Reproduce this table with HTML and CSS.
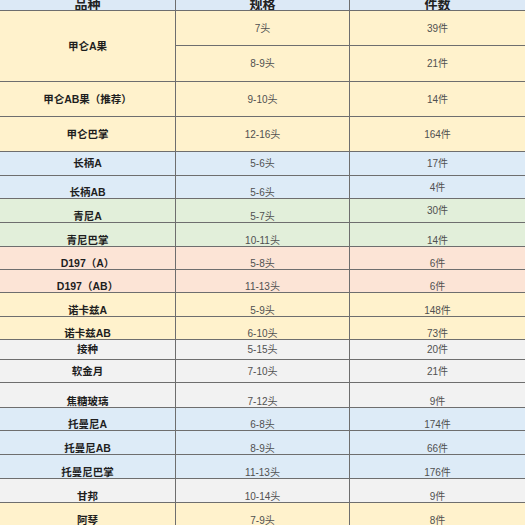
FILE: index.html
```html
<!DOCTYPE html>
<html lang="zh">
<head>
<meta charset="utf-8">
<link rel="stylesheet" href="styles.css">
</head>
<body>
<div class="sheet">
  <div class="c hd">品种</div><div class="c hd">规格</div><div class="c hd">件数</div>

  <div class="c y n span2">甲仑A果</div><div class="c y v">7头</div><div class="c y v">39件</div>
  <div class="c y v">8-9头</div><div class="c y v">21件</div>
  <div class="c y n">甲仑AB果（推荐）</div><div class="c y v">9-10头</div><div class="c y v">14件</div>
  <div class="c y n">甲仑巴掌</div><div class="c y v">12-16头</div><div class="c y v">164件</div>

  <div class="c bl n">长柄A</div><div class="c bl v">5-6头</div><div class="c bl v">17件</div>
  <div class="c bl n b">长柄AB</div><div class="c bl v b">5-6头</div><div class="c bl v">4件</div>

  <div class="c g n b">青尼A</div><div class="c g v b">5-7头</div><div class="c g v">30件</div>
  <div class="c g n b">青尼巴掌</div><div class="c g v b">10-11头</div><div class="c g v b">14件</div>

  <div class="c p n b">D197（A）</div><div class="c p v b">5-8头</div><div class="c p v b">6件</div>
  <div class="c p n b">D197（AB）</div><div class="c p v b">11-13头</div><div class="c p v b">6件</div>

  <div class="c y n b">诺卡兹A</div><div class="c y v b">5-9头</div><div class="c y v b">148件</div>
  <div class="c y n b">诺卡兹AB</div><div class="c y v b">6-10头</div><div class="c y v b">73件</div>

  <div class="c gr n">接种</div><div class="c gr v">5-15头</div><div class="c gr v">20件</div>
  <div class="c gr n">软金月</div><div class="c gr v">7-10头</div><div class="c gr v">21件</div>
  <div class="c gr n b">焦糖玻璃</div><div class="c gr v b">7-12头</div><div class="c gr v b">9件</div>

  <div class="c bl n b">托曼尼A</div><div class="c bl v b">6-8头</div><div class="c bl v b">174件</div>
  <div class="c bl n b">托曼尼AB</div><div class="c bl v b">8-9头</div><div class="c bl v b">66件</div>
  <div class="c bl n b">托曼尼巴掌</div><div class="c bl v b">11-13头</div><div class="c bl v b">176件</div>

  <div class="c gr n b">甘邦</div><div class="c gr v b">10-14头</div><div class="c gr v b">9件</div>
  <div class="c y n b">阿琴</div><div class="c y v b">7-9头</div><div class="c y v b">8件</div>
</div>
</body>
</html>
```
FILE: styles.css
```css
html, body {
  margin: 0;
  padding: 0;
  width: 525px;
  height: 525px;
  overflow: hidden;
  background: #fff;
}

.sheet {
  display: grid;
  grid-template-columns: 175px 173px 175px;
  grid-template-rows: 10px 34px 35px 34px 34px 23px 22px 23px 23px 22px 22px 23px 22px 19px 22px 24px 22px 23px 23px 23px 23px;
  gap: 1px;
  background: #6e6e6e;
  width: 525px;
  font-family: "Liberation Sans", "Noto Sans CJK SC", sans-serif;
}

.c {
  display: flex;
  align-items: center;
  justify-content: center;
  overflow: hidden;
  line-height: 11px;
  white-space: nowrap;
}

.c.b {
  align-items: flex-end;
  padding-bottom: 0;
}

.span2 {
  grid-row: span 2;
}

.hd {
  background: #dce9f6;
  align-items: flex-end;
  font-size: 13px;
  line-height: 13px;
  font-weight: bold;
  color: #222;
  font-family: "Noto Sans CJK SC", sans-serif;
}

.n {
  font-size: 10.5px;
  font-weight: bold;
  color: #1e1e1e;
}

.v {
  font-size: 10px;
  color: #505050;
}

.y { background: #fff2cc; }
.bl { background: #ddebf7; }
.g { background: #e2efda; }
.p { background: #fce4d6; }
.gr { background: #f2f2f2; }
```
